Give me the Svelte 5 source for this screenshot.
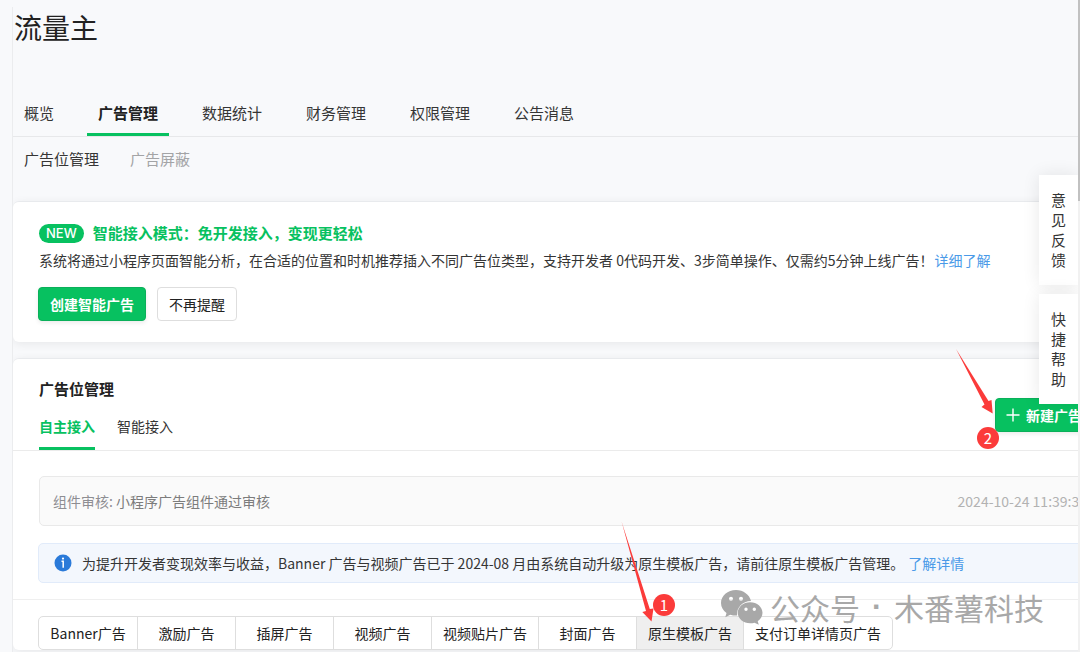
<script>
  const tabs = ['概览', '广告管理', '数据统计', '财务管理', '权限管理', '公告消息'];
  let tab = $state('广告管理');

  const kinds = ['Banner广告', '激励广告', '插屏广告', '视频广告', '视频贴片广告', '封面广告', '原生模板广告', '支付订单详情页广告'];
  let kind = $state('原生模板广告');
</script>

<div class="page">
  <main>
    <div class="sheet">
      <h1>流量主</h1>
      <nav class="tabs">
        {#each tabs as t}
          <button class:active={t === tab} onclick={() => (tab = t)}>{t}</button>
        {/each}
      </nav>
      <nav class="subnav">
        <a class="current" href="#slots">广告位管理</a>
        <a href="#block">广告屏蔽</a>
      </nav>

      <section class="card promo">
        <h2><span class="new">NEW</span>智能接入模式：免开发接入，变现更轻松</h2>
        <p>系统将通过小程序页面智能分析，在合适的位置和时机推荐插入不同广告位类型，支持开发者 0代码开发、3步简单操作、仅需约5分钟上线广告！<a href="#detail">详细了解</a></p>
        <div class="actions">
          <button class="btn primary">创建智能广告</button>
          <button class="btn">不再提醒</button>
        </div>
      </section>

      <section class="card slots">
        <header>
          <div>
            <h2>广告位管理</h2>
            <nav class="modes">
              <button class="active">自主接入</button>
              <button>智能接入</button>
            </nav>
          </div>
          <button class="btn primary create">
            <svg width="14" height="14" viewBox="0 0 14 14" aria-hidden="true"><path d="M7 0.5v13M0.5 7h13" stroke="#fff" stroke-width="1.4" /></svg>
            新建广告
          </button>
        </header>
        <div class="notices">
          <div class="notice">
            <span>组件审核: <span class="msg">小程序广告组件通过审核</span></span>
            <time>2024-10-24 11:39:35</time>
          </div>
          <div class="info">
            <svg width="18" height="18" viewBox="0 0 18 18" aria-hidden="true">
              <circle cx="9" cy="9" r="8.5" fill="#2a7ad9" />
              <circle cx="9" cy="4.600" r="1.100" fill="#fff" />
              <path d="M7.500 7.200h1.700v6.600" fill="none" stroke="#fff" stroke-width="1.500" />
            </svg>
            <p>为提升开发者变现效率与收益，Banner 广告与视频广告已于 2024-08 月由系统自动升级为原生模板广告，请前往原生模板广告管理。<a href="#more">了解详情</a></p>
          </div>
        </div>
        <div class="kinds">
          {#each kinds as k}
            <button class:active={k === kind} onclick={() => (kind = k)}>{k}</button>
          {/each}
        </div>
      </section>
    </div>
  </main>

  <aside class="side">
    <button>意见反馈</button>
    <button>快捷帮助</button>
  </aside>
  <div class="scroll"></div>

  <svg class="arrows" width="1080" height="652" viewBox="0 0 1080 652" aria-hidden="true">
    <path fill="#fb3b3a" d="M956 349L988.500 401L991.500 400L992.700 413.500L981.500 407L984.500 404.500Z" />
    <path fill="#fb3b3a" d="M621.700 522L649.800 609L653.500 608.500L651.500 621.500L642.300 612L646 611Z" />
  </svg>
  <span class="mark one">1</span>
  <span class="mark two">2</span>

  <div class="watermark">
    <svg width="42" height="35" viewBox="0 0 42 35" aria-hidden="true">
      <path fill-rule="evenodd" d="M15 0C6.700 0 0 5.800 0 13c0 4 2.100 7.500 5.500 9.900L4.300 27.300l5-2.600c1.700.5 3.700.9 5.700.9l1.100-.1C15.400 17.500 21.500 11 30 11C28.500 4.700 22.400 0 15 0ZM10 6.700a2 2 0 1 1 0 4a2 2 0 0 1 0-4ZM20 6.700a2 2 0 1 1 0 4a2 2 0 0 1 0-4Z" />
      <path fill-rule="evenodd" d="M29.200 12.300C22.200 12.300 16.700 17 16.700 22.800s5.500 10.500 12.500 10.500c1.500 0 3-.2 4.300-.6l4.300 2.100l-1.100-3.600c3-1.900 4.800-5 4.800-8.400C41.500 17 36 12.300 29.200 12.300ZM25 17.600a1.700 1.700 0 1 1 0 3.400a1.700 1.700 0 0 1 0-3.400ZM33.300 17.600a1.700 1.700 0 1 1 0 3.400a1.700 1.700 0 0 1 0-3.400Z" />
    </svg>
    <div class="account"><span>公众号</span><span class="dot">·</span><span>木番薯科技</span></div>
  </div>
</div>

<style>
  :global(body) {
    background: #f8f9fb;
    overflow: hidden;
  }
  .page {
    position: relative;
    height: 100vh;
    overflow: hidden;
    padding: 7px 2px 0 12px;
    box-sizing: border-box;
    font-family: 'Noto Sans CJK SC', sans-serif;
    font-size: 14px;
    line-height: 20px;
    color: #353535;
  }
  main {
    height: 100%;
    overflow: hidden;
    border-left: 1px solid #ebecee;
  }
  .sheet {
    width: calc(100% + 41px);
  }
  h1, h2, p {
    margin: 0;
  }
  button {
    font: inherit;
    color: inherit;
    background: none;
    border: 0;
    padding: 0;
    white-space: nowrap;
    cursor: pointer;
  }
  a {
    color: #4a9ae8;
    text-decoration: none;
  }
  h1 {
    padding: 0 1px;
    font-size: 28px;
    line-height: 40px;
    font-weight: 400;
    color: #222;
  }
  .tabs {
    display: flex;
    gap: 22px;
    height: 89px;
    align-items: flex-end;
    border-bottom: 1px solid #e7e8ea;
    font-size: 15px;
  }
  .tabs button {
    padding: 10px 11px;
    border-bottom: 3px solid transparent;
  }
  .tabs .active {
    font-weight: 700;
    color: #222;
    border-color: #07c160;
  }
  .subnav {
    display: flex;
    gap: 31px;
    padding: 12px 11px;
    font-size: 15px;
    height: 20px;
  }
  .subnav a {
    color: #a3a4a6;
  }
  .subnav .current {
    color: #353535;
  }
  .card {
    background: #fff;
    border-top: 1px solid #e8eaed;
    border-radius: 6px;
    box-shadow: 0 2px 10px rgba(0, 0, 0, 0.07);
  }
  .promo {
    margin: 20px 0 16px;
    padding: 20px 25px;
  }
  .promo h2 {
    display: flex;
    align-items: center;
    gap: 9px;
    font-size: 15px;
    line-height: 22px;
    color: #07c160;
    padding-left: 1px;
  }
  .new {
    border-radius: 10px;
    background: #07c160;
    color: #fff;
    font-family: Inter, sans-serif;
    font-weight: 500;
    font-size: 13px;
    line-height: 19px;
    padding: 0 7px;
  }
  .promo p {
    padding: 6px 1px 17px;
    white-space: nowrap;
  }
  .promo p a {
    margin-left: 1px;
  }
  .actions {
    display: flex;
    gap: 11px;
    padding-bottom: 1px;
  }
  .btn {
    height: 34px;
    padding: 0 11px;
    border: 1px solid #dedede;
    border-radius: 4px;
    background: #fff;
    color: #222;
  }
  .primary {
    background: #07c160;
    border-color: #0ab05a;
    color: #fff;
    font-weight: 700;
    box-shadow: 0 2px 4px rgba(0, 0, 0, 0.08);
  }
  .slots header {
    display: flex;
    justify-content: space-between;
    padding: 20px 25px 0 26px;
    border-bottom: 1px solid #ebebeb;
  }
  .slots h2 {
    font-size: 15px;
    color: #222;
  }
  .modes {
    display: flex;
    gap: 22px;
    margin-top: 17px;
  }
  .modes button {
    padding-bottom: 11px;
    border-bottom: 3px solid transparent;
  }
  .modes .active {
    color: #07c160;
    font-weight: 700;
    border-color: #07c160;
  }
  .create {
    display: flex;
    align-items: center;
    gap: 6px;
    margin-top: 19px;
    padding: 0 11px 0 10px;
  }
  .notices {
    padding: 25px 25px 16px;
    border-bottom: 1px solid #efefef;
  }
  .notice {
    display: flex;
    justify-content: space-between;
    margin-left: 1px;
    padding: 14px 6px 14px 13px;
    border: 1px solid #e9e9e9;
    border-radius: 5px;
    background: #fafafa;
    color: #8e8e93;
  }
  .msg {
    color: #7c7c7c;
  }
  time {
    color: #b2b2b2;
  }
  .info {
    display: flex;
    align-items: center;
    gap: 10px;
    margin-top: 17px;
    padding: 9px 15px;
    border: 1px solid #e1ebfa;
    border-radius: 5px;
    background: #f3f7fd;
    white-space: nowrap;
  }
  .info a {
    margin-left: 4px;
  }
  .kinds {
    display: flex;
    width: max-content;
    margin: 16px 25px;
    border: 1px solid #dedede;
    border-radius: 5px;
    overflow: hidden;
  }
  .kinds button {
    height: 32px;
    min-width: 98px;
    box-sizing: border-box;
    padding: 0 11px;
    color: #222;
  }
  .kinds button + button {
    border-left: 1px solid #dedede;
  }
  .kinds .active {
    background: #efefef;
  }
  .side {
    position: absolute;
    top: 175px;
    right: 2px;
    display: grid;
    gap: 9px;
  }
  .side button {
    width: 39px;
    padding: 15px 12px;
    background: #fff;
    font-size: 15px;
    white-space: normal;
    box-shadow: 0 0 18px rgba(0, 0, 0, 0.09);
  }
  .scroll {
    position: absolute;
    top: 0;
    bottom: 0;
    right: 0;
    width: 2px;
    background: linear-gradient(#c1c1c1 201px, #f1f1f1 201px);
  }
  .arrows {
    position: absolute;
    top: 0;
    left: 0;
    pointer-events: none;
  }
  .mark {
    position: absolute;
    width: 22px;
    height: 22px;
    border-radius: 50%;
    background: #fb3b3a;
    color: #fff;
    font-size: 15px;
    line-height: 21px;
    text-align: center;
  }
  .one {
    left: 653px;
    top: 594px;
  }
  .two {
    left: 977px;
    top: 427px;
  }
  .watermark {
    position: absolute;
    left: 721px;
    top: 587px;
    display: flex;
    align-items: center;
    gap: 7px;
    font-size: 30px;
    line-height: 40px;
    color: #a8a8a8;
    fill: #a8a8a8;
    white-space: nowrap;
    pointer-events: none;
  }
  .account {
    display: flex;
    gap: 12px;
  }
  .dot {
    font-family: 'Liberation Sans', sans-serif;
    font-weight: 700;
  }
</style>
